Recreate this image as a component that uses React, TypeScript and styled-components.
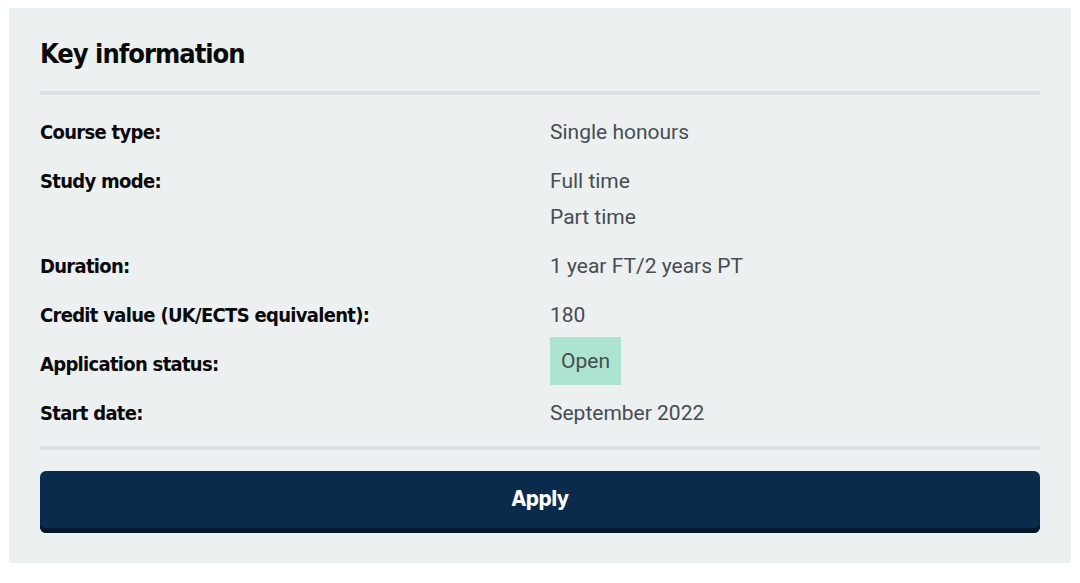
import styled, {createGlobalStyle} from "styled-components";

const GlobalStyle = createGlobalStyle`
    body {
        margin: 0;
        background: #ffffff;
        font-family: Roboto, "Liberation Sans", sans-serif;
    }
`

const condensed = `"DejaVu Sans Condensed", "DejaVu Sans", "Liberation Sans", sans-serif`

const Panel = styled.section`
    margin: 8px 9px 0 9px;
    padding: 26px 31px 30px 31px;
    background: #ecf0f1;
`

const Heading = styled.h2`
    margin: 0;
    padding-bottom: 17px;
    font-family: ${condensed};
    font-stretch: condensed;
    font-size: 27px;
    letter-spacing: -1px;
    line-height: 40px;
    font-weight: 700;
    color: #0a0a0a;
    border-bottom: 4px solid #dce1e6;
`

const List = styled.dl`
    margin: 0;
    padding: 13px 0 8px 0;
    border-bottom: 4px solid #dce1e6;
`

const Row = styled.div`
    display: grid;
    grid-template-columns: 510px 1fr;
    padding: 6px 0 7px 0;
`

const Label = styled.dt`
    font-family: ${condensed};
    font-stretch: condensed;
    font-size: 20px;
    letter-spacing: -0.7px;
    line-height: 36px;
    font-weight: 700;
    color: #0a0a0a;
`

const Values = styled.dd`
    margin: 0;
    display: flex;
    flex-direction: column;
`

const Value = styled.span`
    font-size: 21px;
    line-height: 36px;
    color: #474c52;
`

const Badge = styled.span`
    align-self: flex-start;
    margin: -9px 0 -3px 0;
    padding: 0 11px;
    font-size: 21px;
    line-height: 48px;
    color: #474c52;
    background: #ade4cf;
`

const ApplyButton = styled.button`
    display: block;
    width: 100%;
    margin-top: 21px;
    height: 62px;
    padding: 0 0 6px 0;
    border: none;
    border-radius: 6px;
    background: #0b2b4d;
    box-shadow: inset 0 -5px 0 #05182b;
    font-family: ${condensed};
    font-stretch: condensed;
    font-size: 21px;
    letter-spacing: -0.7px;
    font-weight: 700;
    color: #ffffff;
    cursor: pointer;
`

type Info = {
    label: string;
    values: string[];
    badge?: boolean;
}

const rows: Info[] = [
    {label: 'Course type:', values: ['Single honours']},
    {label: 'Study mode:', values: ['Full time', 'Part time']},
    {label: 'Duration:', values: ['1 year FT/2 years PT']},
    {label: 'Credit value (UK/ECTS equivalent):', values: ['180']},
    {label: 'Application status:', values: ['Open'], badge: true},
    {label: 'Start date:', values: ['September 2022']},
]

export default function App() {
    return (
        <>
            <GlobalStyle/>
            <Panel>
                <Heading>Key information</Heading>
                <List>
                    {rows.map(row => (
                        <Row key={row.label}>
                            <Label>{row.label}</Label>
                            <Values>
                                {row.values.map(v => row.badge
                                    ? <Badge key={v}>{v}</Badge>
                                    : <Value key={v}>{v}</Value>)}
                            </Values>
                        </Row>
                    ))}
                </List>
                <ApplyButton>Apply</ApplyButton>
            </Panel>
        </>
    )
}
